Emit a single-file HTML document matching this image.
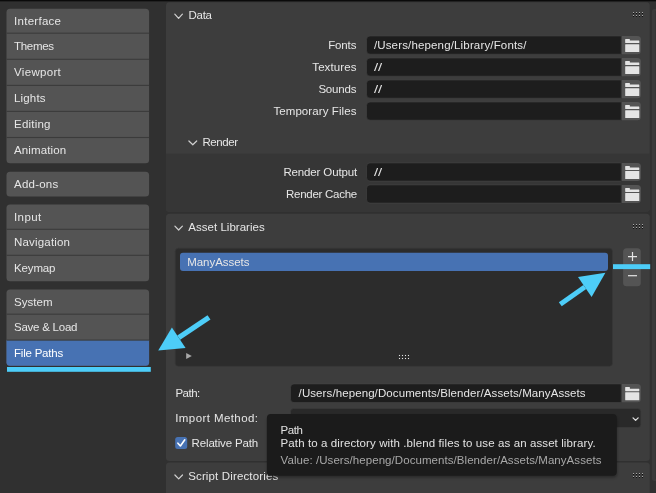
<!DOCTYPE html>
<html><head><meta charset="utf-8"><title>Blender Preferences - File Paths</title>
<style>
html,body{margin:0;padding:0;background:#303030;overflow:hidden}
svg{display:block;will-change:transform;font-family:'Liberation Sans', sans-serif;}
</style></head>
<body>
<svg width="656" height="493" viewBox="0 0 656 493" font-family='"Liberation Sans", sans-serif'>
<defs><filter id="sh" x="-5%" y="-20%" width="110%" height="140%"><feGaussianBlur stdDeviation="1.6"/></filter></defs>
<rect x="0.00" y="0.00" width="656.00" height="493.00" rx="0" fill="#303030" />
<rect x="651.90" y="9.00" width="8.10" height="472.00" rx="2.5" fill="#3a3a3a" />
<rect x="655.20" y="11.00" width="0.80" height="468.00" rx="0" fill="#353535" />
<rect x="0.00" y="0.00" width="656.00" height="1.35" rx="0" fill="#0a0a0a" />
<rect x="6.50" y="8.70" width="142.60" height="154.60" rx="3.5" fill="#545454" />
<rect x="6.50" y="32.65" width="142.60" height="1.10" rx="0" fill="#3b3b3b" />
<rect x="6.50" y="58.75" width="142.60" height="1.10" rx="0" fill="#3b3b3b" />
<rect x="6.50" y="84.85" width="142.60" height="1.10" rx="0" fill="#3b3b3b" />
<rect x="6.50" y="110.85" width="142.60" height="1.10" rx="0" fill="#3b3b3b" />
<rect x="6.50" y="136.95" width="142.60" height="1.10" rx="0" fill="#3b3b3b" />
<text x="14.00" y="24.90" font-size="11.5" fill="#e6e6e6" text-anchor="start" textLength="47.0" lengthAdjust="spacing">Interface</text>
<text x="14.00" y="50.20" font-size="11.5" fill="#e6e6e6" text-anchor="start" textLength="40.0" lengthAdjust="spacing">Themes</text>
<text x="14.00" y="76.30" font-size="11.5" fill="#e6e6e6" text-anchor="start" textLength="46.8" lengthAdjust="spacing">Viewport</text>
<text x="14.00" y="102.35" font-size="11.5" fill="#e6e6e6" text-anchor="start" textLength="31.5" lengthAdjust="spacing">Lights</text>
<text x="14.00" y="128.40" font-size="11.5" fill="#e6e6e6" text-anchor="start" textLength="36.5" lengthAdjust="spacing">Editing</text>
<text x="14.00" y="154.35" font-size="11.5" fill="#e6e6e6" text-anchor="start" textLength="52.2" lengthAdjust="spacing">Animation</text>
<rect x="6.50" y="171.70" width="142.60" height="24.70" rx="3.5" fill="#545454" />
<text x="14.00" y="188.00" font-size="11.5" fill="#e6e6e6" text-anchor="start" textLength="44.2" lengthAdjust="spacing">Add-ons</text>
<rect x="6.50" y="204.50" width="142.60" height="76.80" rx="3.5" fill="#545454" />
<rect x="6.50" y="228.75" width="142.60" height="1.10" rx="0" fill="#3b3b3b" />
<rect x="6.50" y="254.75" width="142.60" height="1.10" rx="0" fill="#3b3b3b" />
<text x="14.00" y="220.85" font-size="11.5" fill="#e6e6e6" text-anchor="start" textLength="27.2" lengthAdjust="spacing">Input</text>
<text x="14.00" y="246.25" font-size="11.5" fill="#e6e6e6" text-anchor="start" textLength="56.0" lengthAdjust="spacing">Navigation</text>
<text x="14.00" y="272.25" font-size="11.5" fill="#e6e6e6" text-anchor="start" textLength="41.5" lengthAdjust="spacing">Keymap</text>
<rect x="6.50" y="289.50" width="142.60" height="76.30" rx="3.5" fill="#545454" />
<path d="M6.5 340.10 H149.1 V362.30 Q149.1 365.80 145.6 365.80 H10 Q6.5 365.80 6.5 362.30 Z" fill="#4772b3"/>
<rect x="6.50" y="313.65" width="142.60" height="1.10" rx="0" fill="#3b3b3b" />
<rect x="6.50" y="339.55" width="142.60" height="1.10" rx="0" fill="#3b3b3b" />
<text x="14.00" y="305.80" font-size="11.5" fill="#e6e6e6" text-anchor="start" textLength="38.5" lengthAdjust="spacing">System</text>
<text x="14.00" y="331.10" font-size="11.5" fill="#e6e6e6" text-anchor="start" textLength="63.5" lengthAdjust="spacing">Save &amp; Load</text>
<text x="14.00" y="356.90" font-size="11.5" fill="#ffffff" text-anchor="start" textLength="49.2" lengthAdjust="spacing">File Paths</text>
<rect x="7.00" y="367.00" width="143.80" height="4.80" rx="0" fill="#4dcdf8" />
<rect x="166.00" y="2.20" width="483.80" height="209.60" rx="3.5" fill="#3d3d3d" />
<path d="M166 153.7 H649.8 V208.3 Q649.8 211.8 646.3 211.8 H169.5 Q166 211.8 166 208.3 Z" fill="#363636"/>
<path d="M174.80 14.20 L178.60 18.30 L182.40 14.20" fill="none" stroke="#d0d0d0" stroke-width="1.2" stroke-linecap="round" stroke-linejoin="round"/>
<text x="188.40" y="19.10" font-size="11.5" fill="#e6e6e6" text-anchor="start" textLength="23.6" lengthAdjust="spacing">Data</text>
<rect x="633.00" y="12.00" width="1.00" height="1.00" rx="0" fill="#a8a8a8" />
<rect x="633.00" y="13.00" width="1.00" height="1.00" rx="0" fill="#0c0c0c" />
<rect x="633.00" y="15.00" width="1.00" height="1.00" rx="0" fill="#a8a8a8" />
<rect x="633.00" y="16.00" width="1.00" height="1.00" rx="0" fill="#0c0c0c" />
<rect x="636.00" y="12.00" width="1.00" height="1.00" rx="0" fill="#a8a8a8" />
<rect x="636.00" y="13.00" width="1.00" height="1.00" rx="0" fill="#0c0c0c" />
<rect x="636.00" y="15.00" width="1.00" height="1.00" rx="0" fill="#a8a8a8" />
<rect x="636.00" y="16.00" width="1.00" height="1.00" rx="0" fill="#0c0c0c" />
<rect x="639.00" y="12.00" width="1.00" height="1.00" rx="0" fill="#a8a8a8" />
<rect x="639.00" y="13.00" width="1.00" height="1.00" rx="0" fill="#0c0c0c" />
<rect x="639.00" y="15.00" width="1.00" height="1.00" rx="0" fill="#a8a8a8" />
<rect x="639.00" y="16.00" width="1.00" height="1.00" rx="0" fill="#0c0c0c" />
<rect x="642.00" y="12.00" width="1.00" height="1.00" rx="0" fill="#a8a8a8" />
<rect x="642.00" y="13.00" width="1.00" height="1.00" rx="0" fill="#0c0c0c" />
<rect x="642.00" y="15.00" width="1.00" height="1.00" rx="0" fill="#a8a8a8" />
<rect x="642.00" y="16.00" width="1.00" height="1.00" rx="0" fill="#0c0c0c" />
<text x="356.40" y="48.80" font-size="11.5" fill="#e6e6e6" text-anchor="end" textLength="28.2" lengthAdjust="spacing">Fonts</text>
<path d="M370.00 36.00 H621.20 V54.20 H370.00 Q366.50 54.20 366.50 50.70 V39.50 Q366.50 36.00 370.00 36.00 Z" fill="#1d1d1d" stroke="#444" stroke-width="0.6"/>
<text x="373.90" y="49.00" font-size="11.5" fill="#e6e6e6" text-anchor="start" textLength="152.5" lengthAdjust="spacing">/Users/hepeng/Library/Fonts/</text>
<path d="M621.90 36.00 H637.40 Q640.90 36.00 640.90 39.50 V50.70 Q640.90 54.20 637.40 54.20 H621.90 Z" fill="#545454"/>
<rect x="625.20" y="39.00" width="4.70" height="2.20" rx="0.5" fill="#e4e4e4" />
<rect x="625.20" y="40.60" width="14.10" height="2.50" rx="0.4" fill="#e4e4e4" />
<rect x="625.20" y="44.20" width="14.10" height="7.90" rx="0.5" fill="#e4e4e4" />
<text x="356.40" y="70.80" font-size="11.5" fill="#e6e6e6" text-anchor="end" textLength="44.1" lengthAdjust="spacing">Textures</text>
<path d="M370.00 58.00 H621.20 V76.20 H370.00 Q366.50 76.20 366.50 72.70 V61.50 Q366.50 58.00 370.00 58.00 Z" fill="#1d1d1d" stroke="#444" stroke-width="0.6"/>
<text x="373.90" y="71.00" font-size="11.5" fill="#e6e6e6" text-anchor="start" textLength="8.2" lengthAdjust="spacingAndGlyphs">//</text>
<path d="M621.90 58.00 H637.40 Q640.90 58.00 640.90 61.50 V72.70 Q640.90 76.20 637.40 76.20 H621.90 Z" fill="#545454"/>
<rect x="625.20" y="61.00" width="4.70" height="2.20" rx="0.5" fill="#e4e4e4" />
<rect x="625.20" y="62.60" width="14.10" height="2.50" rx="0.4" fill="#e4e4e4" />
<rect x="625.20" y="66.20" width="14.10" height="7.90" rx="0.5" fill="#e4e4e4" />
<text x="356.40" y="92.80" font-size="11.5" fill="#e6e6e6" text-anchor="end" textLength="38.0" lengthAdjust="spacing">Sounds</text>
<path d="M370.00 80.00 H621.20 V98.20 H370.00 Q366.50 98.20 366.50 94.70 V83.50 Q366.50 80.00 370.00 80.00 Z" fill="#1d1d1d" stroke="#444" stroke-width="0.6"/>
<text x="373.90" y="93.00" font-size="11.5" fill="#e6e6e6" text-anchor="start" textLength="8.2" lengthAdjust="spacingAndGlyphs">//</text>
<path d="M621.90 80.00 H637.40 Q640.90 80.00 640.90 83.50 V94.70 Q640.90 98.20 637.40 98.20 H621.90 Z" fill="#545454"/>
<rect x="625.20" y="83.00" width="4.70" height="2.20" rx="0.5" fill="#e4e4e4" />
<rect x="625.20" y="84.60" width="14.10" height="2.50" rx="0.4" fill="#e4e4e4" />
<rect x="625.20" y="88.20" width="14.10" height="7.90" rx="0.5" fill="#e4e4e4" />
<text x="356.40" y="114.80" font-size="11.5" fill="#e6e6e6" text-anchor="end" textLength="83.0" lengthAdjust="spacing">Temporary Files</text>
<path d="M370.00 102.00 H621.20 V120.20 H370.00 Q366.50 120.20 366.50 116.70 V105.50 Q366.50 102.00 370.00 102.00 Z" fill="#1d1d1d" stroke="#444" stroke-width="0.6"/>
<path d="M621.90 102.00 H637.40 Q640.90 102.00 640.90 105.50 V116.70 Q640.90 120.20 637.40 120.20 H621.90 Z" fill="#545454"/>
<rect x="625.20" y="105.00" width="4.70" height="2.20" rx="0.5" fill="#e4e4e4" />
<rect x="625.20" y="106.60" width="14.10" height="2.50" rx="0.4" fill="#e4e4e4" />
<rect x="625.20" y="110.20" width="14.10" height="7.90" rx="0.5" fill="#e4e4e4" />
<path d="M188.90 141.00 L192.80 144.80 L196.70 141.00" fill="none" stroke="#d0d0d0" stroke-width="1.2" stroke-linecap="round" stroke-linejoin="round"/>
<text x="202.40" y="146.00" font-size="11.5" fill="#e6e6e6" text-anchor="start" textLength="35.8" lengthAdjust="spacing">Render</text>
<text x="357.20" y="175.60" font-size="11.5" fill="#e6e6e6" text-anchor="end" textLength="73.8" lengthAdjust="spacing">Render Output</text>
<path d="M370.00 162.90 H621.20 V181.10 H370.00 Q366.50 181.10 366.50 177.60 V166.40 Q366.50 162.90 370.00 162.90 Z" fill="#1d1d1d" stroke="#444" stroke-width="0.6"/>
<text x="373.90" y="175.90" font-size="11.5" fill="#e6e6e6" text-anchor="start" textLength="8.2" lengthAdjust="spacingAndGlyphs">//</text>
<path d="M621.90 162.90 H637.40 Q640.90 162.90 640.90 166.40 V177.60 Q640.90 181.10 637.40 181.10 H621.90 Z" fill="#545454"/>
<rect x="625.20" y="165.90" width="4.70" height="2.20" rx="0.5" fill="#e4e4e4" />
<rect x="625.20" y="167.50" width="14.10" height="2.50" rx="0.4" fill="#e4e4e4" />
<rect x="625.20" y="171.10" width="14.10" height="7.90" rx="0.5" fill="#e4e4e4" />
<text x="357.20" y="197.60" font-size="11.5" fill="#e6e6e6" text-anchor="end" textLength="71.2" lengthAdjust="spacing">Render Cache</text>
<path d="M370.00 184.90 H621.20 V203.10 H370.00 Q366.50 203.10 366.50 199.60 V188.40 Q366.50 184.90 370.00 184.90 Z" fill="#1d1d1d" stroke="#444" stroke-width="0.6"/>
<path d="M621.90 184.90 H637.40 Q640.90 184.90 640.90 188.40 V199.60 Q640.90 203.10 637.40 203.10 H621.90 Z" fill="#545454"/>
<rect x="625.20" y="187.90" width="4.70" height="2.20" rx="0.5" fill="#e4e4e4" />
<rect x="625.20" y="189.50" width="14.10" height="2.50" rx="0.4" fill="#e4e4e4" />
<rect x="625.20" y="193.10" width="14.10" height="7.90" rx="0.5" fill="#e4e4e4" />
<rect x="166.00" y="213.80" width="483.80" height="247.10" rx="3.5" fill="#3d3d3d" />
<path d="M174.90 226.10 L178.65 230.00 L182.40 226.10" fill="none" stroke="#d0d0d0" stroke-width="1.2" stroke-linecap="round" stroke-linejoin="round"/>
<text x="188.30" y="231.00" font-size="11.5" fill="#e6e6e6" text-anchor="start" textLength="76.4" lengthAdjust="spacing">Asset Libraries</text>
<rect x="633.00" y="224.00" width="1.00" height="1.00" rx="0" fill="#a8a8a8" />
<rect x="633.00" y="225.00" width="1.00" height="1.00" rx="0" fill="#0c0c0c" />
<rect x="633.00" y="227.00" width="1.00" height="1.00" rx="0" fill="#a8a8a8" />
<rect x="633.00" y="228.00" width="1.00" height="1.00" rx="0" fill="#0c0c0c" />
<rect x="636.00" y="224.00" width="1.00" height="1.00" rx="0" fill="#a8a8a8" />
<rect x="636.00" y="225.00" width="1.00" height="1.00" rx="0" fill="#0c0c0c" />
<rect x="636.00" y="227.00" width="1.00" height="1.00" rx="0" fill="#a8a8a8" />
<rect x="636.00" y="228.00" width="1.00" height="1.00" rx="0" fill="#0c0c0c" />
<rect x="639.00" y="224.00" width="1.00" height="1.00" rx="0" fill="#a8a8a8" />
<rect x="639.00" y="225.00" width="1.00" height="1.00" rx="0" fill="#0c0c0c" />
<rect x="639.00" y="227.00" width="1.00" height="1.00" rx="0" fill="#a8a8a8" />
<rect x="639.00" y="228.00" width="1.00" height="1.00" rx="0" fill="#0c0c0c" />
<rect x="642.00" y="224.00" width="1.00" height="1.00" rx="0" fill="#a8a8a8" />
<rect x="642.00" y="225.00" width="1.00" height="1.00" rx="0" fill="#0c0c0c" />
<rect x="642.00" y="227.00" width="1.00" height="1.00" rx="0" fill="#a8a8a8" />
<rect x="642.00" y="228.00" width="1.00" height="1.00" rx="0" fill="#0c0c0c" />
<rect x="175.30" y="248.30" width="437.10" height="117.90" rx="3" fill="#2c2c2c" stroke="#373737" stroke-width="0.6"/>
<rect x="180.00" y="252.70" width="428.00" height="18.20" rx="3" fill="#4772b3" />
<text x="187.20" y="265.60" font-size="11.5" fill="#e6e6e6" text-anchor="start" textLength="62.3" lengthAdjust="spacing">ManyAssets</text>
<path d="M186.2 353.1 L191.8 356 L186.2 358.9 Z" fill="#a8a8a8" stroke="none" stroke-width="1" />
<rect x="398.95" y="354.95" width="1.10" height="1.10" rx="0" fill="#e6e6e6" />
<rect x="398.95" y="357.95" width="1.10" height="1.10" rx="0" fill="#e6e6e6" />
<rect x="401.95" y="354.95" width="1.10" height="1.10" rx="0" fill="#e6e6e6" />
<rect x="401.95" y="357.95" width="1.10" height="1.10" rx="0" fill="#e6e6e6" />
<rect x="404.95" y="354.95" width="1.10" height="1.10" rx="0" fill="#e6e6e6" />
<rect x="404.95" y="357.95" width="1.10" height="1.10" rx="0" fill="#e6e6e6" />
<rect x="407.95" y="354.95" width="1.10" height="1.10" rx="0" fill="#e6e6e6" />
<rect x="407.95" y="357.95" width="1.10" height="1.10" rx="0" fill="#e6e6e6" />
<rect x="623.10" y="248.30" width="17.70" height="38.00" rx="3.5" fill="#545454" />
<rect x="623.10" y="266.80" width="17.70" height="1.00" rx="0" fill="#444" />
<path d="M628 256.6 H637 M632.5 252.1 V261.1" fill="none" stroke="#e6e6e6" stroke-width="1.2" />
<path d="M628 275.7 H637" fill="none" stroke="#e6e6e6" stroke-width="1.2" />
<text x="175.40" y="397.30" font-size="11.5" fill="#e6e6e6" text-anchor="start" textLength="24.9" lengthAdjust="spacing">Path:</text>
<path d="M294.00 383.90 H621.20 V402.60 H294.00 Q290.50 402.60 290.50 399.10 V387.40 Q290.50 383.90 294.00 383.90 Z" fill="#1d1d1d" stroke="#444" stroke-width="0.6"/>
<text x="298.60" y="397.30" font-size="11.5" fill="#e6e6e6" text-anchor="start" textLength="287.0" lengthAdjust="spacing">/Users/hepeng/Documents/Blender/Assets/ManyAssets</text>
<path d="M621.90 384.10 H637.40 Q640.90 384.10 640.90 387.60 V398.80 Q640.90 402.30 637.40 402.30 H621.90 Z" fill="#545454"/>
<rect x="625.20" y="387.10" width="4.70" height="2.20" rx="0.5" fill="#e4e4e4" />
<rect x="625.20" y="388.70" width="14.10" height="2.50" rx="0.4" fill="#e4e4e4" />
<rect x="625.20" y="392.30" width="14.10" height="7.90" rx="0.5" fill="#e4e4e4" />
<text x="175.20" y="421.90" font-size="11.5" fill="#e6e6e6" text-anchor="start" textLength="82.8" lengthAdjust="spacing">Import Method:</text>
<rect x="290.50" y="408.60" width="350.30" height="18.90" rx="3" fill="#292929" stroke="#3d3d3d" stroke-width="0.6"/>
<path d="M633.05 417.85 L635.60 420.35 L638.15 417.85" fill="none" stroke="#e0e0e0" stroke-width="1.3" stroke-linecap="round" stroke-linejoin="round"/>
<rect x="175.20" y="437.00" width="12.00" height="12.00" rx="2.5" fill="#4772b3" />
<path d="M177.9 443.2 L180.4 446 L184.8 439.8" fill="none" stroke="#fff" stroke-width="1.6" stroke-linecap="round" stroke-linejoin="round"/>
<text x="191.60" y="447.10" font-size="11.5" fill="#e6e6e6" text-anchor="start" textLength="66.5" lengthAdjust="spacing">Relative Path</text>
<path d="M166 493 V466.1 Q166 462.6 169.5 462.6 H646.3 Q649.8 462.6 649.8 466.1 V493 Z" fill="#3d3d3d"/>
<path d="M174.90 475.00 L178.70 478.90 L182.50 475.00" fill="none" stroke="#d0d0d0" stroke-width="1.2" stroke-linecap="round" stroke-linejoin="round"/>
<text x="188.20" y="479.90" font-size="11.5" fill="#e6e6e6" text-anchor="start" textLength="90.0" lengthAdjust="spacing">Script Directories</text>
<rect x="633.00" y="473.00" width="1.00" height="1.00" rx="0" fill="#a8a8a8" />
<rect x="633.00" y="474.00" width="1.00" height="1.00" rx="0" fill="#0c0c0c" />
<rect x="633.00" y="476.00" width="1.00" height="1.00" rx="0" fill="#a8a8a8" />
<rect x="633.00" y="477.00" width="1.00" height="1.00" rx="0" fill="#0c0c0c" />
<rect x="636.00" y="473.00" width="1.00" height="1.00" rx="0" fill="#a8a8a8" />
<rect x="636.00" y="474.00" width="1.00" height="1.00" rx="0" fill="#0c0c0c" />
<rect x="636.00" y="476.00" width="1.00" height="1.00" rx="0" fill="#a8a8a8" />
<rect x="636.00" y="477.00" width="1.00" height="1.00" rx="0" fill="#0c0c0c" />
<rect x="639.00" y="473.00" width="1.00" height="1.00" rx="0" fill="#a8a8a8" />
<rect x="639.00" y="474.00" width="1.00" height="1.00" rx="0" fill="#0c0c0c" />
<rect x="639.00" y="476.00" width="1.00" height="1.00" rx="0" fill="#a8a8a8" />
<rect x="639.00" y="477.00" width="1.00" height="1.00" rx="0" fill="#0c0c0c" />
<rect x="642.00" y="473.00" width="1.00" height="1.00" rx="0" fill="#a8a8a8" />
<rect x="642.00" y="474.00" width="1.00" height="1.00" rx="0" fill="#0c0c0c" />
<rect x="642.00" y="476.00" width="1.00" height="1.00" rx="0" fill="#a8a8a8" />
<rect x="642.00" y="477.00" width="1.00" height="1.00" rx="0" fill="#0c0c0c" />
<rect x="267.5" y="416.5" width="349.5" height="61" rx="4" fill="#000" opacity="0.35" filter="url(#sh)"/>
<rect x="266.90" y="414.00" width="349.90" height="61.70" rx="4" fill="#1b1b1b" />
<text x="280.50" y="433.60" font-size="11.5" fill="#e2e2e2" text-anchor="start" textLength="22.4" lengthAdjust="spacing">Path</text>
<text x="280.60" y="446.70" font-size="11.5" fill="#e2e2e2" text-anchor="start" textLength="315.0" lengthAdjust="spacing">Path to a directory with .blend files to use as an asset library.</text>
<text x="280.60" y="463.50" font-size="11.5" fill="#a8a8a8" text-anchor="start" textLength="320.8" lengthAdjust="spacing">Value: /Users/hepeng/Documents/Blender/Assets/ManyAssets</text>
<path d="M209.00 317.40 L178.75 337.65" fill="none" stroke="#4dcdf8" stroke-width="5.3" />
<path d="M158.20 350.50 L171.90 327.40 L185.60 347.90 Z" fill="#4dcdf8" stroke="none" stroke-width="1" />
<path d="M560.30 304.30 L584.80 287.00" fill="none" stroke="#4dcdf8" stroke-width="5.0" />
<path d="M605.40 272.70 L578.00 277.10 L591.60 296.90 Z" fill="#4dcdf8" stroke="none" stroke-width="1" />
<rect x="613.00" y="264.20" width="37.20" height="4.90" rx="0" fill="#4dcdf8" />
</svg>
</body></html>
